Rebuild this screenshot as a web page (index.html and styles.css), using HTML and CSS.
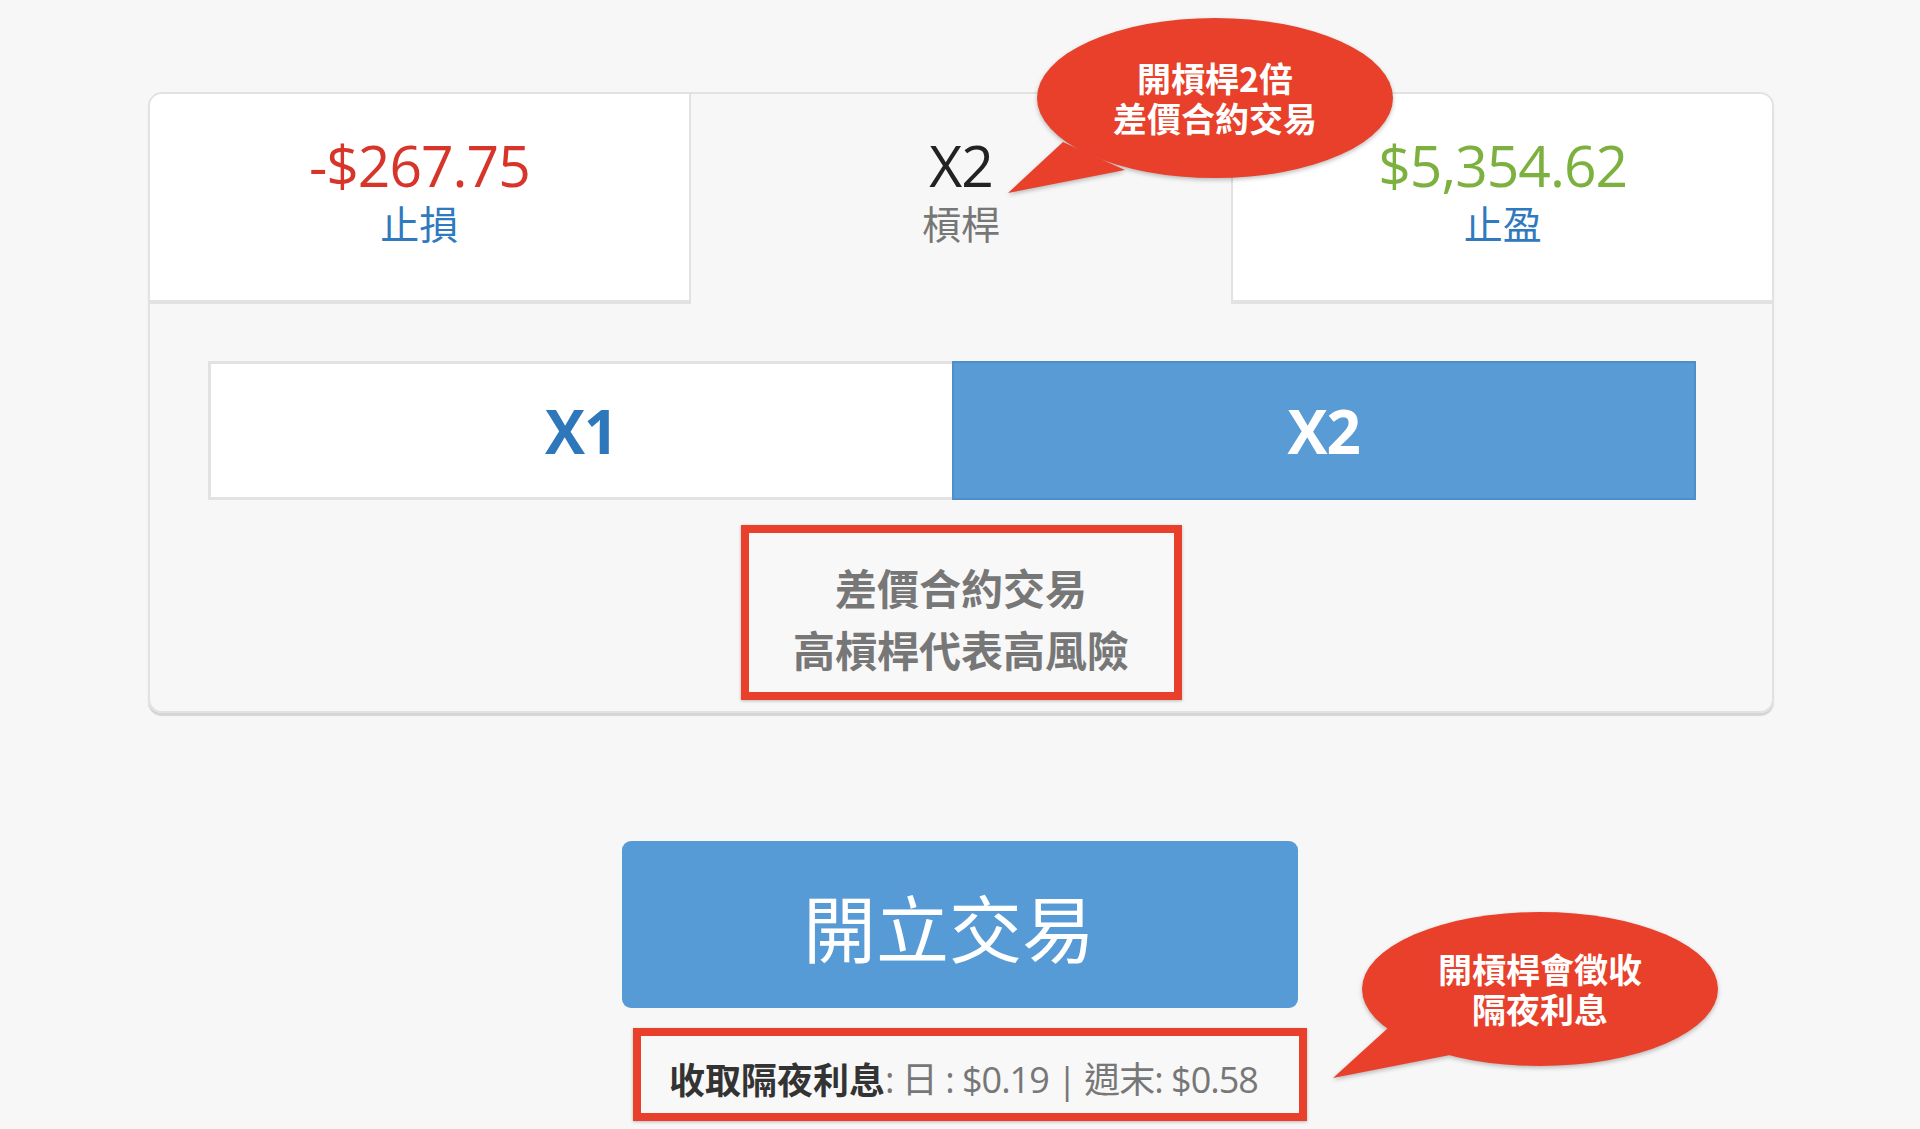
FILE: index.html
```html
<!DOCTYPE html>
<html lang="zh-Hant">
<head>
    <meta charset="UTF-8">
    <meta name="viewport" content="width=device-width, initial-scale=1.0">
    <title>開立交易</title>
    <link rel="stylesheet" href="styles.css">
</head>
<body>
    <div class="page">
        <div class="card">
            <div class="summary">
                <div class="cell cell-side cell-left">
                    <div class="value loss">-$267.75</div>
                    <div class="label">止損</div>
                </div>
                <div class="cell">
                    <div class="value lev">X2</div>
                    <div class="label grey">槓桿</div>
                </div>
                <div class="cell cell-side cell-right">
                    <div class="value profit">$5,354.62</div>
                    <div class="label">止盈</div>
                </div>
            </div>
            <div class="toggle">
                <button class="opt">X1</button>
                <button class="opt active">X2</button>
            </div>
            <div class="note">差價合約交易<br>高槓桿代表高風險</div>
        </div>

        <button class="open-btn">開立交易</button>
        <div class="fee"><b>收取隔夜利息</b>: 日 : $0.19 | 週末: $0.58</div>

        <!-- callouts -->
        <div class="bubble bubble-lev">
            <svg class="bubble-shape" width="356" height="160" viewBox="0 0 356 160">
                <ellipse cx="178" cy="80" rx="178" ry="80"/>
                <polygon points="26,124 -29,175 88,152"/>
            </svg>
            <div class="bubble-text">開槓桿2倍<br>差價合約交易</div>
        </div>
        <div class="bubble bubble-fee">
            <svg class="bubble-shape" width="356" height="154" viewBox="0 0 356 154">
                <ellipse cx="178" cy="77" rx="178" ry="77"/>
                <polygon points="26,116 -29,166 88,143"/>
            </svg>
            <div class="bubble-text">開槓桿會徵收<br>隔夜利息</div>
        </div>
    </div>
</body>
</html>
```

FILE: styles.css
```css
body {
    margin: 0;
    background: #f7f7f7;
    font-family: "Open Sans", "Noto Sans CJK TC", sans-serif;
}
.page {
    position: relative;
    width: 1920px;
    height: 1129px;
    padding-top: 92px;
    box-sizing: border-box;
    overflow: hidden;
}

/* card */
.card {
    width: 1626px;
    margin-left: 148px;
    box-sizing: border-box;
    border: 2px solid #e2e2e2;
    border-radius: 14px;
    padding-bottom: 11px;
    overflow: hidden;
    box-shadow: 0 3px 1px #d4d4d4;
}
.summary {
    display: grid;
    grid-template-columns: 1fr 1fr 1fr;
    height: 210px;
}
.cell {
    text-align: center;
    padding-top: 41px;
    box-sizing: border-box;
}
.cell-side {
    background: #fff;
    border-bottom: 4px solid #e2e2e2;
}
.cell-left {
    border-right: 2px solid #e2e2e2;
}
.cell-right {
    border-left: 2px solid #e2e2e2;
}
.value {
    font-size: 57px;
    line-height: 60px;
    letter-spacing: -1px;
}
.loss { color: #d7342a; }
.profit { color: #7cb13f; }
.lev { color: #222; }
.label {
    font-family: "Noto Sans CJK TC", sans-serif;
    font-size: 39px;
    line-height: 48px;
    margin-top: 3px;
    color: #3079be;
}
.label.grey { color: #777; }

/* leverage toggle */
.toggle {
    display: flex;
    height: 139px;
    margin: 57px 76px 0 58px;
}
.opt {
    flex: 1;
    margin: 0;
    padding: 0;
    background: #fff;
    border: 3px solid #e2e2e2;
    border-right: none;
    font-family: "Open Sans", sans-serif;
    font-weight: 700;
    font-size: 60px;
    letter-spacing: -1px;
    color: #2d77ba;
}
.opt.active {
    background: #589bd5;
    border: 2px solid #4e8ecb;
    color: #fff;
}

.note {
    width: 441px;
    height: 175px;
    margin: 25px auto 0;
    box-sizing: border-box;
    border: 8px solid #e8402a;
    background: #f8f8f8;
    box-shadow: 0 1px 3px rgba(0, 0, 0, 0.25);
    padding-top: 23px;
    text-align: center;
    font-family: "Noto Sans CJK TC", sans-serif;
    font-weight: 700;
    font-size: 42px;
    line-height: 62px;
    color: #777;
}

/* bottom */
.open-btn {
    display: block;
    width: 676px;
    height: 167px;
    margin: 128px 0 0 622px;
    padding: 0 22px 0 0;
    border: none;
    border-radius: 9px;
    background: #579bd6;
    color: #fff;
    font-family: "Noto Sans CJK TC", sans-serif;
    font-size: 73px;
}
.fee {
    display: flex;
    align-items: center;
    width: 674px;
    height: 93px;
    margin: 20px 0 0 633px;
    box-sizing: border-box;
    border: 8px solid #e8402a;
    background: #f8f8f8;
    box-shadow: 0 1px 3px rgba(0, 0, 0, 0.25);
    padding: 6px 0 0 28px;
    font-size: 36px;
    color: #777;
    white-space: nowrap;
    letter-spacing: -1px;
}
.fee b {
    font-family: "Noto Sans CJK TC", sans-serif;
    color: #333;
    letter-spacing: 0;
}

/* callouts */
.bubble {
    position: absolute;
    width: 356px;
}
.bubble-lev {
    left: 1037px;
    top: 18px;
    height: 160px;
}
.bubble-fee {
    left: 1362px;
    top: 912px;
    height: 154px;
}
.bubble-shape {
    position: absolute;
    left: 0;
    top: 0;
    overflow: visible;
    fill: #e8402a;
    filter: drop-shadow(0 2px 2px rgba(0, 0, 0, 0.25));
}
.bubble-text {
    position: relative;
    display: flex;
    align-items: center;
    justify-content: center;
    height: 100%;
    text-align: center;
    font-family: "Noto Sans CJK TC", sans-serif;
    font-weight: 700;
    font-size: 34px;
    line-height: 40px;
    color: #fff;
}
```
